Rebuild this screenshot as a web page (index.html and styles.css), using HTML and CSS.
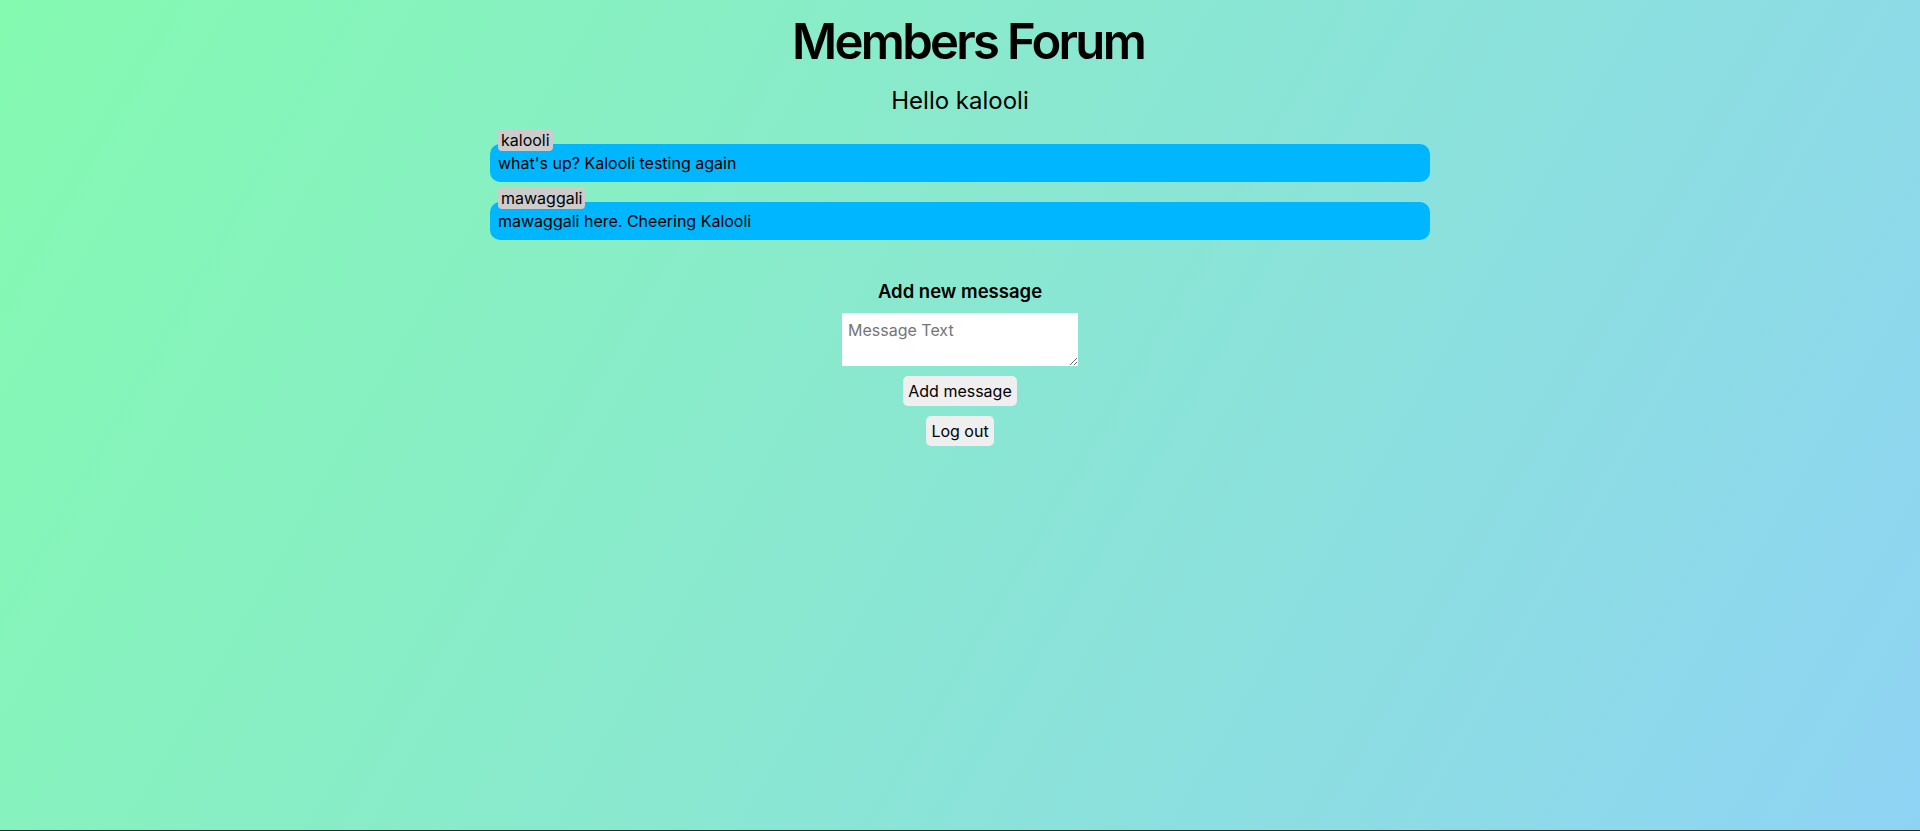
FILE: index.html
```html
<!DOCTYPE html>
<html lang="en">
<head>
<meta charset="utf-8">
<title>Members Forum</title>
<link rel="stylesheet" href="styles.css">
</head>
<body>
<main class="page">
  <h1 class="title">Members Forum</h1>
  <p class="hello">Hello kalooli</p>
  <section class="messages">
    <div class="message">
      <span class="user">kalooli</span>
      <div class="bubble">what's up? Kalooli testing again</div>
    </div>
    <div class="message">
      <span class="user">mawaggali</span>
      <div class="bubble">mawaggali here. Cheering Kalooli</div>
    </div>
  </section>
  <form class="new-message">
    <h3 class="form-title">Add new message</h3>
    <textarea class="text-input" placeholder="Message Text"></textarea>
    <button type="button" class="btn">Add message</button>
    <button type="button" class="btn">Log out</button>
  </form>
</main>
</body>
</html>
```

FILE: styles.css
```css
html {
  min-height: 100%;
  background: linear-gradient(120deg, #84fab0 0%, #8fd3f4 100%);
}

body {
  margin: 0;
  min-height: 100vh;
  box-sizing: border-box;
  border-bottom: 1px solid #2a2a2a;
  font-family: Inter, "Noto Sans", sans-serif;
  color: #000;
}

.page {
  display: flex;
  flex-direction: column;
  align-items: center;
}

.title {
  margin: 11px 0 0;
  padding-left: 16px;
  font-size: 49px;
  font-weight: 600;
  letter-spacing: -0.055em;
  line-height: 62px;
}

.hello {
  margin: 13px 0 0;
  font-size: 24px;
  line-height: 29px;
}

.messages {
  width: 940px;
  margin-top: 14px;
  display: flex;
  flex-direction: column;
  gap: 5px;
}

.message {
  display: flex;
  flex-direction: column;
  align-items: flex-start;
}

.user {
  position: relative;
  z-index: 1;
  margin: 0 0 -7px 8px;
  padding: 1px 3px;
  background: #cccccc;
  border-radius: 4px;
  font-size: 16px;
  line-height: 20px;
}

.bubble {
  align-self: stretch;
  background: #00b6ff;
  border-radius: 10px;
  padding: 9px 8px;
  font-size: 16px;
  line-height: 20px;
}

.new-message {
  margin-top: 40px;
  display: flex;
  flex-direction: column;
  align-items: center;
  gap: 10px;
}

.form-title {
  margin: 0;
  font-size: 18.5px;
  font-weight: 600;
  line-height: 23px;
}

.text-input {
  width: 236px;
  height: 53px;
  box-sizing: border-box;
  border: none;
  outline: none;
  padding: 7px 6px 6px;
  margin: 0;
  background: #fff;
  font-family: Inter, "Noto Sans", sans-serif;
  font-size: 16px;
  line-height: 20px;
  color: #000;
}

.text-input::placeholder {
  color: #757575;
}

.btn {
  border: none;
  border-radius: 5px;
  background: #efefef;
  padding: 5px 5px;
  font-family: Inter, "Noto Sans", sans-serif;
  font-size: 16px;
  line-height: 20px;
  color: #000;
  cursor: pointer;
}
```
